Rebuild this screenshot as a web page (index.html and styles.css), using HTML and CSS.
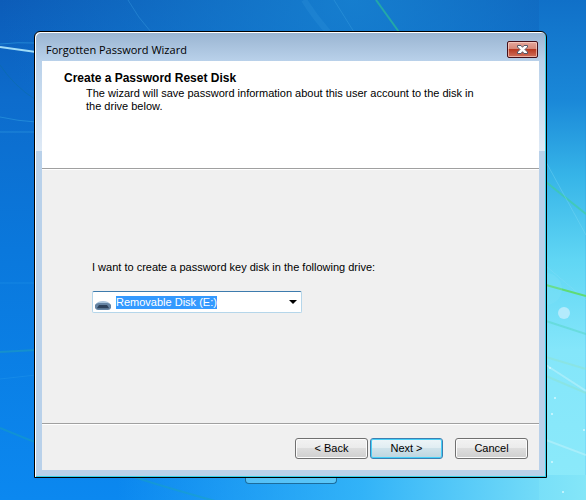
FILE: index.html
```
<!DOCTYPE html>
<html lang="en">
  <head>
    <meta charset="UTF-8" />
    <meta name="viewport" content="width=device-width, initial-scale=1.0" />
    <title>Forgotten Password Wizard</title>
    <link rel="stylesheet" href="styles.css">
  </head>

  <body>
    <svg class="wallpaper" viewBox="0 0 586 500" preserveAspectRatio="none" fill="none" aria-hidden="true">
      <path d="M0 47L36 52" stroke="#9fdcf8" stroke-width="2" />
      <path d="M0 44Q18 42 36 43M0 117Q18 121 36 122M0 132H36" stroke="#2f9be0" stroke-opacity=".6" />
      <path d="M0 65Q14 86 36 100" stroke="#0b6ca8" stroke-opacity=".6" />
      <path d="M0 283H36M0 379L36 375" stroke="#1f93ea" stroke-opacity=".5" />
      <path d="M0 352L36 350" stroke="#1fa2b8" stroke-width="2" stroke-opacity=".5" />
      <path d="M0 428Q100 470 215 501" stroke="#19a7b4" stroke-width="2" stroke-opacity=".4" />
      <path d="M128 0Q138 18 151 32M334 0L354 32" stroke="#3da1e2" stroke-opacity=".4" />
      <path d="M304 0Q314 16 328 32" stroke="#3da1e2" stroke-width="6" stroke-opacity=".2" />
      <path d="M376 0L399 32" stroke="#23a8a8" stroke-width="2" />
      <path d="M546 182L586 214" stroke="#3fcf9a" stroke-width="2" stroke-opacity=".6" />
      <path d="M546 162L586 235M546 266L586 300" stroke="#8fe0f8" stroke-opacity=".3" />
      <path d="M546 285L586 296" stroke="#5fdb74" stroke-width="2" />
      <path d="M546 321L586 334" stroke="#56d6c4" stroke-width="2" stroke-opacity=".5" />
      <path d="M546 357L586 369M546 376L586 393" stroke="#90e2c4" stroke-width="2" stroke-opacity=".4" />
      <path d="M546 365L586 391M546 440L586 455" stroke="#c4f3fb" stroke-width="2" stroke-opacity=".5" />
      <circle cx="546" cy="289" r="16" fill="#8be4fb" fill-opacity=".2" />
      <circle cx="564" cy="313" r="6" fill="#b4ebfc" />
      <g fill="#d5f8fe">
        <circle cx="550" cy="368" r="1" />
        <circle cx="555" cy="398" r="1" />
        <circle cx="552" cy="414" r="1" />
        <circle cx="584" cy="430" r="1" />
        <circle cx="552" cy="462" r="1" />
        <circle cx="563" cy="492" r="1" />
      </g>
    </svg>

    <div class="desktop">
      <main class="window">
        <header class="title-bar">
          <h1>Forgotten Password Wizard</h1>
          <button type="button" class="close" aria-label="Close">
            <svg width="13" height="11" viewBox="0 0 13 11">
              <path d="M1.500 1.500H5L6.500 3.300 8 1.500H11.500V3L9 5.500 11.500 8V9.500H8L6.500 7.700 5 9.500H1.500V8L4 5.500 1.500 3z" fill="#fff" stroke="#545666" stroke-linejoin="round" />
            </svg>
          </button>
        </header>

        <form class="wizard">
          <section class="intro">
            <h2>Create a Password Reset Disk</h2>
            <p>The wizard will save password information about this user account to the disk in the drive below.</p>
          </section>

          <section class="content">
            <label for="drive">I want to create a password key disk in the following drive:</label>
            <div class="combo">
              <svg class="drive-icon" width="16" height="9" viewBox="0 0 16 9" aria-hidden="true">
                <path d="M3 1Q8-1 13 1L16 4H0z" fill="#a9c4dc" />
                <path d="M0 4Q1 2 4 2H12Q15 2 16 4V7Q15 9 13 9H3Q1 9 0 7z" fill="#6483a3" />
                <path d="M4 4H12L14 7H2z" fill="#2c425c" />
                <path d="M2 7H14V8H2z" fill="#56728f" />
              </svg>
              <select id="drive" name="drive">
                <option>Removable Disk (E:)</option>
              </select>
              <svg class="arrow" width="8" height="4" viewBox="0 0 8 4" aria-hidden="true">
                <path d="M0 0H8L4 4z" fill="#000" />
              </svg>
            </div>
          </section>

          <footer class="actions">
            <button type="button">&lt; Back</button>
            <button type="submit" class="default">Next &gt;</button>
            <button type="button" class="cancel">Cancel</button>
          </footer>
        </form>
      </main>
      <div class="taskbar-item"></div>
    </div>
  </body>
</html>
```

FILE: styles.css
```
* {
  box-sizing: border-box;
}

body {
  margin: 0;
  font-family: "Liberation Sans", Arial, sans-serif;
  font-size: 11px;
  line-height: 13px;
  color: #000;
  background:
    linear-gradient(90deg, rgba(60, 190, 250, 0) 20%, rgba(60, 190, 250, 0.8) 62%, #84e6f8 100%) bottom / 100% 5% no-repeat,
    linear-gradient(#1070c8, #1a88d8 20%, #36b4e8 35%, #60d6f4 52%, #84e6fa 70%, #8ceafa) right / 8% 100% no-repeat,
    radial-gradient(ellipse 60% 50% at 60% 0%, rgba(24, 134, 212, 0.8), rgba(24, 134, 212, 0)),
    linear-gradient(#0c5cb8, #0d6ccc 20%, #0a78dc 50%, #0b88f0);
}

.wallpaper {
  position: absolute;
  inset: 0;
  width: 100%;
  height: 100%;
}

.desktop {
  position: relative;
  display: flex;
  flex-direction: column;
  min-height: 100vh;
  padding: 31px 39px 16px 34px;
}

.window {
  flex: 1;
  display: flex;
  flex-direction: column;
  padding: 0 7px 7px;
  border: 1px solid #000;
  border-radius: 6px 6px 0 0;
  background:
    linear-gradient(#99b4d1, #b9d1ea) top / 100% 29px no-repeat,
    linear-gradient(#b9d1ea, #dfeaf6) 0 29px / 100% 90px no-repeat,
    #b9d1ea;
  box-shadow: inset 1px 1px #fff, inset -1px -1px #35d0e8;
}

.title-bar {
  display: flex;
  align-items: center;
  justify-content: space-between;
  padding: 9px 1px 3px 4px;
}

.title-bar h1 {
  margin: 0;
  font-family: "Open Sans", "Noto Sans", sans-serif;
  font-size: 11px;
  font-weight: 400;
  line-height: 17px;
}

.close {
  display: flex;
  align-items: center;
  justify-content: center;
  width: 31px;
  height: 17px;
  padding: 0;
  border: 1px solid #43101a;
  border-radius: 2px;
  background: linear-gradient(#e5a79c, #d58676 48%, #b83a22 50%, #d0705c);
  box-shadow: inset 0 0 0 1px rgba(255, 220, 210, 0.6);
}

.wizard {
  flex: 1;
  display: flex;
  flex-direction: column;
  background: #f0f0f0;
}

.intro {
  min-height: 108px;
  padding: 10px 60px 10px 22px;
  border-bottom: 1px solid #a0a0a0;
  background: #fff;
}

.intro h2 {
  margin: 0 0 2px;
  font-size: 12px;
  line-height: 14px;
}

.intro p {
  margin: 0 0 0 22px;
}

.content {
  flex: 1;
  padding: 91px 50px 20px;
  border-top: 1px solid #fff;
  border-bottom: 1px solid #a0a0a0;
}

.content label {
  display: block;
  margin-bottom: 17px;
}

.combo {
  display: flex;
  align-items: center;
  width: 210px;
  max-width: 100%;
  height: 22px;
  padding: 0 4px 0 2px;
  border: 1px solid #b5d6ea;
  border-top-color: #3d7bad;
  border-radius: 2px;
  background: #fff;
}

.drive-icon {
  align-self: flex-end;
  margin: 0 5px 2px 0;
}

.combo select {
  appearance: none;
  height: 13px;
  padding: 0;
  border: 0;
  border-radius: 0;
  font: inherit;
  color: #fff;
  background: #3399ff;
  outline: none;
}

.arrow {
  margin-left: auto;
}

.actions {
  display: flex;
  gap: 2px;
  justify-content: flex-end;
  padding: 13px 11px 11px;
  border-top: 1px solid #fff;
}

.actions button {
  width: 73px;
  height: 21px;
  padding: 0;
  border: 1px solid #707070;
  border-radius: 3px;
  font: inherit;
  color: #000;
  background: linear-gradient(#f2f2f2, #ebebeb 48%, #dddddd 50%, #cfcfcf);
  box-shadow: inset 0 0 0 1px #fcfcfc;
}

.actions .default {
  border-color: #3c7fb1;
  background: linear-gradient(#eef5f8, #e0edf2 48%, #cfe2ea 50%, #bdd5df);
  box-shadow: inset 0 0 0 1px #47d0f8;
}

.actions .cancel {
  margin-left: 10px;
}

.taskbar-item {
  align-self: center;
  width: 92px;
  height: 6px;
  border: 1px solid #1c6c9c;
  border-top: 0;
  border-radius: 0 0 4px 4px;
  background: rgba(120, 215, 250, 0.6);
}
```
